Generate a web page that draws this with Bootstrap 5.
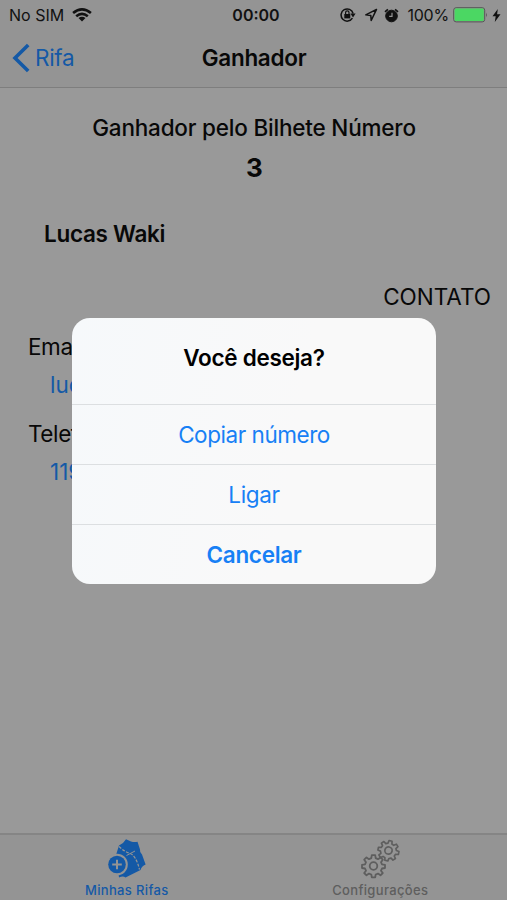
<!DOCTYPE html>
<html lang="pt-BR">
<head>
<meta charset="utf-8">
<meta name="viewport" content="width=device-width, initial-scale=1">
<title>Ganhador</title>
<link href="https://cdn.jsdelivr.net/npm/bootstrap@5.3.0/dist/css/bootstrap.min.css" rel="stylesheet">
<style>
body{font-family:Inter,"Liberation Sans",sans-serif;background:#999;color:#080808;height:900px;overflow:hidden;font-size:22.5px;line-height:30px}
.screen{height:900px}
.topbar{height:88px;background:#949494;border-bottom:1px solid #7e7e7e}
.status{height:30px;font-size:16px;line-height:30px;color:#111}
.status>*,.navrow>*{flex:1 1 0}
.navrow{height:56px;line-height:56px}
.dim-blue{color:#1459a6}
.tabs{height:67px;background:#949494;border-top:2px solid #858585;font-size:13px;line-height:16px;font-weight:500}
.tabs .off{color:#5e5e5e}
.heading-a{padding:25px 0 0 1px;font-weight:500}
.number{font-size:26px;font-weight:700;line-height:30px;margin-top:10px;padding-left:2px}
.winner{margin:36px 0 0 44px;font-weight:600}
.contact{margin:33px 16px 0 0}
.fields{margin:20px 0 0 28px}
.fields dt,.fields dd{font-weight:400;margin:0;height:30px}
.fields dt{letter-spacing:-.4px}
.fields dd{margin:8px 0 19px 22px}
.alert-box{width:364px;height:266px;left:72px;top:318px;border-radius:18px;background:linear-gradient(100deg,#f6f9fb 0,#f9f9f9 60%);overflow:hidden}
.alert-box h2{font-size:22.5px;font-weight:600;height:86px;line-height:80px;color:#000}
.alert-box button{height:60px;border:0;border-top:1px solid #dcdfe1;background:none;color:#1780f5;padding:0;line-height:58px}
svg{display:block;flex:none}
.sim{margin-left:9px}
.clock{padding-left:7px}
.gap-a{margin-left:8px}
.gap-b{margin-left:6px}
.pct{margin-left:8px;letter-spacing:-.2px}
.gap-c{margin-left:4px}
.gap-d{margin-left:4px}
.end-icons{padding-right:6px}
.back{margin-left:12px;margin-right:5px}
.back-label{letter-spacing:-.3px}
.tabicon{margin-top:3px;margin-bottom:3px}
.ls-title{letter-spacing:-.2px}
.ls-nav{letter-spacing:-.3px;padding-left:1px}
.ls-name{letter-spacing:-.3px}
.ls-copy{letter-spacing:-.45px}
.ls-tab{letter-spacing:.35px}
</style>
</head>
<body>
<div class="screen d-flex flex-column position-relative">
  <header class="topbar">
    <div class="status d-flex">
      <div class="d-flex align-items-center">
        <span class="sim">No SIM</span>
        <svg class="ms-2" width="20" height="14" viewBox="0 0 20 14" fill="none" stroke="#111" stroke-width="2.6"><path d="M1.1 5.1Q10-2.4 18.9 5.1M4.2 8.3Q10 3.4 15.8 8.3"/><path d="M6.5 10.1Q10 7.2 13.5 10.1L10 13.6Z" fill="#111" stroke="none"/></svg>
      </div>
      <div class="clock text-center fw-semibold"><span class="ps-1">00:00</span></div>
      <div class="end-icons d-flex align-items-center justify-content-end">
        <svg width="16" height="16" viewBox="0 0 16 16" fill="none" stroke="#111" stroke-width="1.5"><path d="M12.4 11.2A6.1 6.1 0 1 1 13.1 6.5"/><path d="M10.4 6.6h5.2l-2.6 3.8z" fill="#111" stroke="none"/><rect x="4.3" y="7" width="6" height="4.4" fill="#111" stroke="none"/><path d="M5.6 7V5.6a1.7 1.7 0 0 1 3.4 0V7" stroke-width="1.2"/></svg>
        <svg class="gap-a" width="14" height="14" viewBox="0 0 14 14" fill="none" stroke="#111" stroke-width="1.5" stroke-linejoin="round"><path d="M12.5 1.4 1.8 6.8l5 .7.4 5z"/></svg>
        <svg class="gap-b" width="15" height="15" viewBox="0 0 15 15" fill="none" stroke="#111"><circle cx="7.5" cy="8" r="5.8" fill="#111"/><path d="M1 3.8 3.9 1.3M14 3.8 11.1 1.3" stroke-width="1.7"/><path d="M8 4.8v3.6H5.2" stroke="#949494" stroke-width="1.2"/></svg>
        <span class="pct">100%</span>
        <svg class="gap-c" width="35" height="16" viewBox="0 0 35 16"><rect x=".7" y=".7" width="31" height="14.2" rx="2.5" fill="none" stroke="#555" stroke-width="1"/><rect x="1.6" y="1.6" width="29.2" height="12.4" rx="1.3" fill="#4bd763"/><path d="M33 5.4q1.8 2.4 0 4.8z" fill="#555"/></svg>
        <svg class="gap-d" width="9" height="13" viewBox="0 0 9 13"><path d="M5.8 0 .5 7.2h3.2L2.8 13l5.7-7.8H5.1z" fill="#111"/></svg>
      </div>
    </div>
    <nav class="navrow d-flex">
      <a class="dim-blue text-decoration-none d-flex align-items-center" href="#">
        <svg class="back" width="18" height="30" viewBox="0 0 18 30" fill="none" stroke="#1459a6" stroke-width="3.6"><path d="M16.2 2 3 15l13.2 13"/></svg>
        <span class="back-label">Rifa</span>
      </a>
      <span class="ls-nav text-center fw-semibold">Ganhador</span>
      <span></span>
    </nav>
  </header>

  <main class="flex-grow-1">
    <div class="heading-a ls-title text-center">Ganhador pelo Bilhete Número</div>
    <div class="number text-center">3</div>
    <div class="winner ls-name">Lucas Waki</div>
    <div class="contact text-end">CONTATO</div>
    <dl class="fields mb-0">
      <dt>Email</dt><dd class="dim-blue">lucas</dd>
      <dt>Telefone</dt><dd class="dim-blue">119</dd>
    </dl>
  </main>

  <footer class="tabs d-flex">
    <a class="w-50 d-flex flex-column align-items-center dim-blue text-decoration-none" href="#">
      <svg class="tabicon" width="38" height="41" viewBox="0 0 38 41"><path d="M8 17 11 7.5Q15.5 5.5 18 1.2L23 3.4Q26 4.6 29.5 3.8L32 11.5Q31.5 14 34 16.5L37.6 26.5Q33.5 28 32.5 32L17.5 39.5Q15 37.5 11 39.5z" fill="#1459a6"/><path d="M11 8.5Q16 13.5 22 15.5T31.5 31.5" fill="none" stroke="#949494" stroke-width="1.2" stroke-dasharray="3 1.4"/><path d="m18.5 17.5 8.5-4.5" fill="none" stroke="#949494" stroke-width="1"/><circle cx="9" cy="26.5" r="10.8" fill="#949494"/><circle cx="9" cy="26.5" r="8.8" fill="#1459a6"/><path d="M9 21.7v9.6M4.2 26.5h9.6" stroke="#949494" stroke-width="2"/></svg>
      <span class="ls-tab">Minhas Rifas</span>
    </a>
    <a class="w-50 d-flex flex-column align-items-center off text-decoration-none" href="#">
      <svg class="tabicon" width="40" height="41" viewBox="0 0 40 41" fill="none" stroke="#5e5e5e" stroke-width="1.8" stroke-linejoin="round"><defs><path id="gear" d="M-1.7-10.8h3.4l.5 3 2.3 1 2.5-1.8 2.3 2.3-1.8 2.5 1 2.1 3 .5v3.2l-3 .5-1 2.2L9.3 7 7 9.3 4.5 7.6l-2.3.9-.5 2.8h-3.4l-.5-2.8-2.3-.9L-7 9.3-9.3 7l1.8-2.3-1-2.2-3-.5v-3.2l3-.5 1-2.1-1.8-2.5L-7-8.6l2.5 1.8 2.3-1z"/></defs><use href="#gear" transform="translate(13.5 28)"/><circle cx="13.5" cy="28" r="3.8"/><g transform="translate(28.5 12.5) rotate(12) scale(.91)"><use href="#gear"/><circle r="4"/></g></svg>
      <span class="ls-tab">Configurações</span>
    </a>
  </footer>

  <section class="alert-box position-absolute d-flex flex-column text-center" role="dialog">
    <h2 class="ls-name m-0">Você deseja?</h2>
    <button type="button" class="ls-copy">Copiar número</button>
    <button type="button" class="ls-name">Ligar</button>
    <button type="button" class="ls-name fw-semibold">Cancelar</button>
  </section>
</div>
<script src="https://cdn.jsdelivr.net/npm/bootstrap@5.3.0/dist/js/bootstrap.bundle.min.js"></script>
</body>
</html>
